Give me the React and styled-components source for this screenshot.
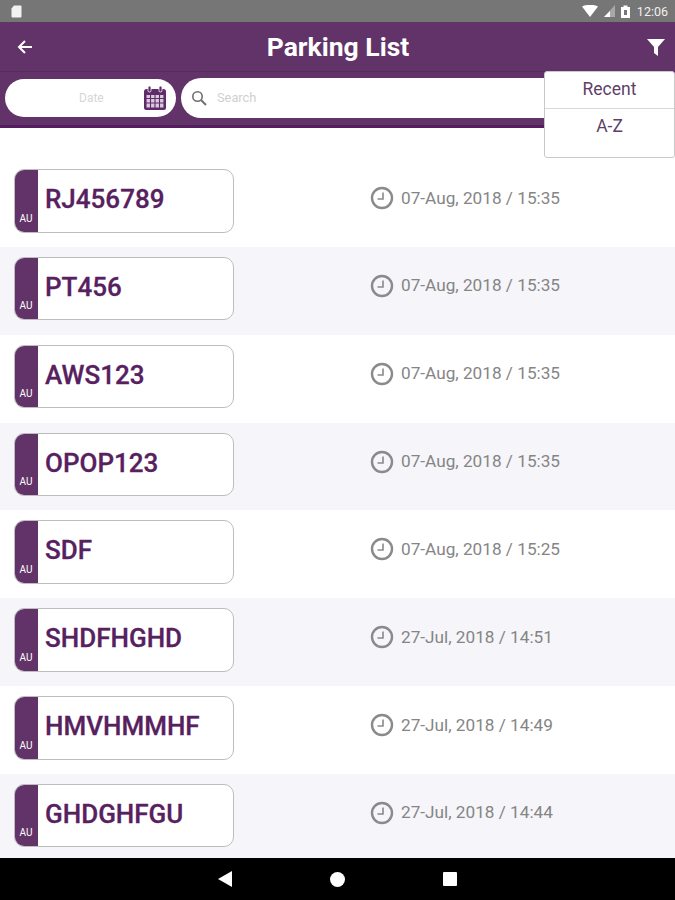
import React from "react";
import styled, { createGlobalStyle } from "styled-components";

const parkings = [
  { plate: "RJ456789", time: "07-Aug, 2018 / 15:35" },
  { plate: "PT456", time: "07-Aug, 2018 / 15:35" },
  { plate: "AWS123", time: "07-Aug, 2018 / 15:35" },
  { plate: "OPOP123", time: "07-Aug, 2018 / 15:35" },
  { plate: "SDF", time: "07-Aug, 2018 / 15:25" },
  { plate: "SHDFHGHD", time: "27-Jul, 2018 / 14:51" },
  { plate: "HMVHMMHF", time: "27-Jul, 2018 / 14:49" },
  { plate: "GHDGHFGU", time: "27-Jul, 2018 / 14:44" },
];

const ClockIcon = () => (
  <svg width="24" height="24" viewBox="0 0 24 24" fill="none" stroke="#8a8a8a" strokeWidth="2.4">
    <circle cx="12" cy="12" r="10" />
    <path d="M13 6.5V13H7.5" strokeWidth="1.6" />
  </svg>
);

const CalendarIcon = () => (
  <svg width="24" height="26" viewBox="0 0 24 26">
    <rect x="1" y="4" width="22" height="21" rx="2.5" fill="#5f2b68" />
    <rect x="5" y="1" width="3" height="6" rx="1.5" fill="#5f2b68" stroke="#fff" strokeWidth="0.8" />
    <rect x="16" y="1" width="3" height="6" rx="1.5" fill="#5f2b68" stroke="#fff" strokeWidth="0.8" />
    <path
      d="M3 9.5h18v13.5H3z M3 13.5h18 M3 18h18 M7.5 9.5v13.5 M12 9.5v13.5 M16.5 9.5v13.5"
      fill="#d9cbdc"
      stroke="#5f2b68"
      strokeWidth="1.1"
    />
  </svg>
);

const App = () => {
  return (
    <Page>
      <GlobalStyle />
      <StatusBar>
        <svg width="11" height="13" viewBox="0 0 11 13">
          <path d="M3 0.5h6.5a1 1 0 0 1 1 1v10a1 1 0 0 1-1 1h-8a1 1 0 0 1-1-1V3.5z" fill="#f2f2f2" />
        </svg>
        <StatusRight>
          <svg width="16" height="12" viewBox="0 0 16 12">
            <path d="M0 1.5C4.5-0.8 11.500-0.8 16 1.500L8 12z" fill="#fff" />
          </svg>
          <svg width="11" height="12" viewBox="0 0 11 12">
            <path d="M11 0v12H0z" fill="#a8a8a8" />
            <path d="M6 6v6H0z" fill="#fff" />
          </svg>
          <svg width="9" height="13" viewBox="0 0 9 13">
            <path d="M0 2h2.500V0.500h4V2H9v11H0z" fill="#fff" />
            <path d="M3 5h3v5H3z" fill="#777" />
          </svg>
          <Clock>12:06</Clock>
        </StatusRight>
      </StatusBar>
      <Header>
        <TitleBar>
          <svg width="18" height="18" viewBox="0 0 18 18" fill="none" stroke="#fff" strokeWidth="2">
            <path d="M16 9H3 M9 3L3 9l6 6" />
          </svg>
          <Title>Parking List</Title>
          <svg width="20" height="20" viewBox="0 0 20 20">
            <path d="M1 2h18l-7 8v9l-4-3v-6z" fill="#fff" />
          </svg>
        </TitleBar>
        <SearchRow>
          <DatePill>
            <DateLabel>Date</DateLabel>
            <CalendarIcon />
          </DatePill>
          <SearchPill>
            <svg width="16" height="16" viewBox="0 0 16 16" fill="none" stroke="#6f6f6f" strokeWidth="1.600">
              <circle cx="6.500" cy="6.500" r="4.700" />
              <path d="M10 10l5 5" strokeWidth="2" />
            </svg>
            <SearchLabel>Search</SearchLabel>
          </SearchPill>
        </SearchRow>
      </Header>
      <List>
        {parkings.map((p, index) => (
          <Row key={p.plate} $tinted={index % 2 === 1}>
            <Plate>
              <PlateSide>AU</PlateSide>
              <PlateNumber>{p.plate}</PlateNumber>
            </Plate>
            <TimeBlock>
              <ClockIcon />
              <TimeText>{p.time}</TimeText>
            </TimeBlock>
          </Row>
        ))}
      </List>
      <NavBar>
        <svg width="14" height="16" viewBox="0 0 14 16">
          <path d="M14 0v16L0 8z" fill="#fff" />
        </svg>
        <svg width="15" height="15" viewBox="0 0 15 15">
          <circle cx="7.500" cy="7.500" r="7.500" fill="#fff" />
        </svg>
        <svg width="14" height="14" viewBox="0 0 14 14">
          <rect width="14" height="14" rx="1" fill="#fff" />
        </svg>
      </NavBar>
      <SortMenu>
        <SortOption $divided>Recent</SortOption>
        <SortOption>A-Z</SortOption>
      </SortMenu>
    </Page>
  );
};

const GlobalStyle = createGlobalStyle`
  body {
    margin: 0;
    font-family: Roboto, "Liberation Sans", sans-serif;
    background: #fff;
  }
`;

const Page = styled.div`
  position: relative;
  display: flex;
  flex-direction: column;
  width: 675px;
  height: 900px;
  overflow: hidden;
`;

const StatusBar = styled.div`
  display: flex;
  flex: none;
  align-items: center;
  justify-content: space-between;
  box-sizing: border-box;
  height: 22px;
  padding: 0 7px 0 11px;
  background: #767676;
`;

const StatusRight = styled.div`
  display: flex;
  align-items: center;
  gap: 6px;
`;

const Clock = styled.span`
  margin-left: 1px;
  font-size: 12.5px;
  color: #f0f0f0;
`;

const Header = styled.div`
  flex: none;
  box-sizing: border-box;
  height: 106px;
  background: #623368;
  border-bottom: 3px solid #551c5f;
`;

const TitleBar = styled.div`
  display: flex;
  align-items: center;
  justify-content: space-between;
  box-sizing: border-box;
  height: 50px;
  padding: 0 9px 0 16px;
  border-bottom: 1px solid #58295f;
`;

const Title = styled.h1`
  margin: 0 0 0 -4px;
  font-size: 26.5px;
  font-weight: 700;
  color: #fff;
`;

const SearchRow = styled.div`
  display: flex;
  align-items: center;
  gap: 5px;
  padding: 6px 15px 0 5px;
`;

const DatePill = styled.div`
  display: flex;
  flex: none;
  align-items: center;
  justify-content: space-between;
  box-sizing: border-box;
  width: 171px;
  height: 38px;
  padding: 0 9px 0 74px;
  border-radius: 19px;
  background: #fff;
`;

const DateLabel = styled.span`
  font-size: 12px;
  color: #d6d6d6;
`;

const SearchPill = styled.div`
  display: flex;
  flex: 1;
  align-items: center;
  gap: 10px;
  box-sizing: border-box;
  height: 40px;
  padding: 0 10px;
  border-radius: 20px;
  background: #fff;
`;

const SearchLabel = styled.span`
  margin-top: -1px;
  font-size: 12.8px;
  color: #d0d0d0;
`;

const List = styled.div`
  flex: 1;
  min-height: 0;
  padding-top: 31px;
  overflow: hidden;
`;

const Row = styled.div`
  display: flex;
  align-items: flex-start;
  box-sizing: border-box;
  height: 87.85px;
  padding: 10px 0 0 14px;
  background: ${(p) => (p.$tinted ? "#f6f5fa" : "#fff")};
`;

const Plate = styled.div`
  display: flex;
  flex: none;
  box-sizing: border-box;
  width: 220px;
  height: 63.5px;
  overflow: hidden;
  border: 1px solid #bdbdbd;
  border-radius: 10px;
  background: #fff;
`;

const PlateSide = styled.div`
  display: flex;
  flex: none;
  align-items: flex-end;
  justify-content: center;
  box-sizing: border-box;
  width: 24px;
  margin: -1px 0 -1px -1px;
  padding-bottom: 9px;
  font-size: 10px;
  color: #fff;
  background: #623368;
`;

const PlateNumber = styled.div`
  padding: 14px 0 0 7px;
  font-size: 26px;
  font-weight: 500;
  line-height: 31px;
  color: #57205f;
  -webkit-text-stroke: 0.3px #57205f;
`;

const TimeBlock = styled.div`
  display: flex;
  align-items: center;
  gap: 7px;
  margin: 17px 0 0 136px;
`;

const TimeText = styled.span`
  margin-top: -1px;
  font-size: 17.2px;
  color: #858585;
`;

const NavBar = styled.div`
  display: flex;
  flex: none;
  align-items: center;
  justify-content: center;
  gap: 98px;
  height: 42px;
  background: #000;
`;

const SortMenu = styled.div`
  position: absolute;
  top: 71px;
  left: 544px;
  box-sizing: border-box;
  width: 131px;
  height: 87px;
  border: 1px solid #c9c9c9;
  border-radius: 3px;
  background: #fff;
`;

const SortOption = styled.div`
  box-sizing: border-box;
  height: ${(p) => (p.$divided ? "37px" : "auto")};
  padding-top: ${(p) => (p.$divided ? "8px" : "8px")};
  font-size: 17.5px;
  line-height: 19px;
  text-align: center;
  color: #5f3f66;
  border-bottom: ${(p) => (p.$divided ? "1px solid #d8d8d8" : "none")};
`;

export default App;
